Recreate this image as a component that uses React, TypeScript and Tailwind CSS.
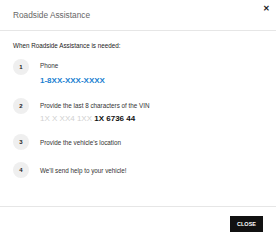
import React from "react";

function Circle({ n }: { n: number }) {
  return (
    <div className="w-[16px] h-[16px] rounded-full bg-[#efefef] flex items-center justify-center text-[6px] font-bold text-[#222] shrink-0">
      {n}
    </div>
  );
}

export default function App() {
  return (
    <div
      className="w-[276px] h-[241px] bg-white flex flex-col relative"
      style={{ fontFamily: '"Liberation Sans", Arial, sans-serif' }}
    >
      <div className="h-[31px] border-b border-[#e6e6e6] flex items-center px-[13px] shrink-0">
        <span className="text-[8.3px] text-[#666]">Roadside Assistance</span>
        <span className="absolute right-[6px] top-[5px] text-[8px] font-bold text-[#222] leading-none">✕</span>
      </div>
      <div className="flex-1 px-[13px] pt-[10px]">
        <div className="text-[6.3px] text-[#222] leading-[9px]">When Roadside Assistance is needed:</div>
        <div className="mt-[9px] flex items-start gap-[11px]">
          <Circle n={1} />
          <div className="flex flex-col pt-[2px]">
            <span className="text-[6.3px] text-[#333] leading-[9px]">Phone</span>
            <span className="text-[8px] font-bold text-[#1b7fd1] leading-[11px] mt-[5px]">1-8XX-XXX-XXXX</span>
          </div>
        </div>
        <div className="mt-[12px] flex items-start gap-[11px]">
          <Circle n={2} />
          <div className="flex flex-col pt-[3px]">
            <span className="text-[6.3px] text-[#333] leading-[9px]">Provide the last 8 characters of the VIN</span>
            <span className="text-[8px] leading-[11px] mt-[3px]">
              <span className="text-[#d0d0d0]">1X X XX4 1XX </span>
              <span className="font-bold text-[#111]">1X 6736 44</span>
            </span>
          </div>
        </div>
        <div className="mt-[10px] flex items-center gap-[11px]">
          <Circle n={3} />
          <span className="text-[6.3px] text-[#333] leading-[9px]">Provide the vehicle's location</span>
        </div>
        <div className="mt-[12px] flex items-center gap-[11px]">
          <Circle n={4} />
          <span className="text-[6.3px] text-[#333] leading-[9px]">We'll send help to your vehicle!</span>
        </div>
      </div>
      <div className="h-[35px] border-t border-[#e6e6e6] flex items-center justify-end px-[13px] shrink-0">
        <button className="w-[33px] h-[16px] bg-[#111] text-white text-[5.5px] font-bold flex items-center justify-center">
          CLOSE
        </button>
      </div>
    </div>
  );
}
